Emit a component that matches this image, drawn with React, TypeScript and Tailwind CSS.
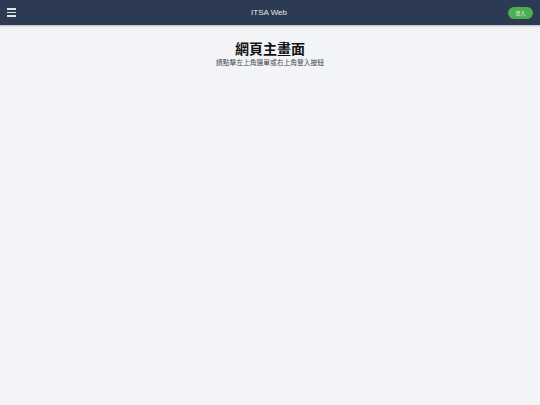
export default function App() {
  return (
    <div className="min-h-[405px] bg-[#f2f4f8] font-['Noto_Sans_CJK_TC','Liberation_Sans',sans-serif]">
      {/* Header */}
      <header className="h-[25px] bg-[#2c3a54] flex items-center px-[7px] shadow-[0_1px_2px_rgba(0,0,0,0.25)]">
        <button className="flex flex-col gap-[2px] w-[9px]">
          <span className="block h-[1.5px] w-full bg-[#dfe2e8]" />
          <span className="block h-[1.5px] w-full bg-[#dfe2e8]" />
          <span className="block h-[1.5px] w-full bg-[#dfe2e8]" />
        </button>
        <div className="flex-1 text-center text-[8px] text-[#e5e7eb] font-['Liberation_Sans',sans-serif] pl-[14px]">
          ITSA Web
        </div>
        <button className="h-[12px] w-[25px] rounded-full bg-[#4caf50] text-[#e8f5e9] text-[5px] leading-none flex items-center justify-center">
          登入
        </button>
      </header>

      {/* Main */}
      <main className="flex flex-col items-center pt-[14px]">
        <h1 className="text-[14px] font-bold text-[#111] leading-[18px]">網頁主畫面</h1>
        <p className="text-[6.75px] text-[#444] leading-[9px] mt-[1px]">請點擊左上角選單或右上角登入按鈕</p>
      </main>
    </div>
  );
}
